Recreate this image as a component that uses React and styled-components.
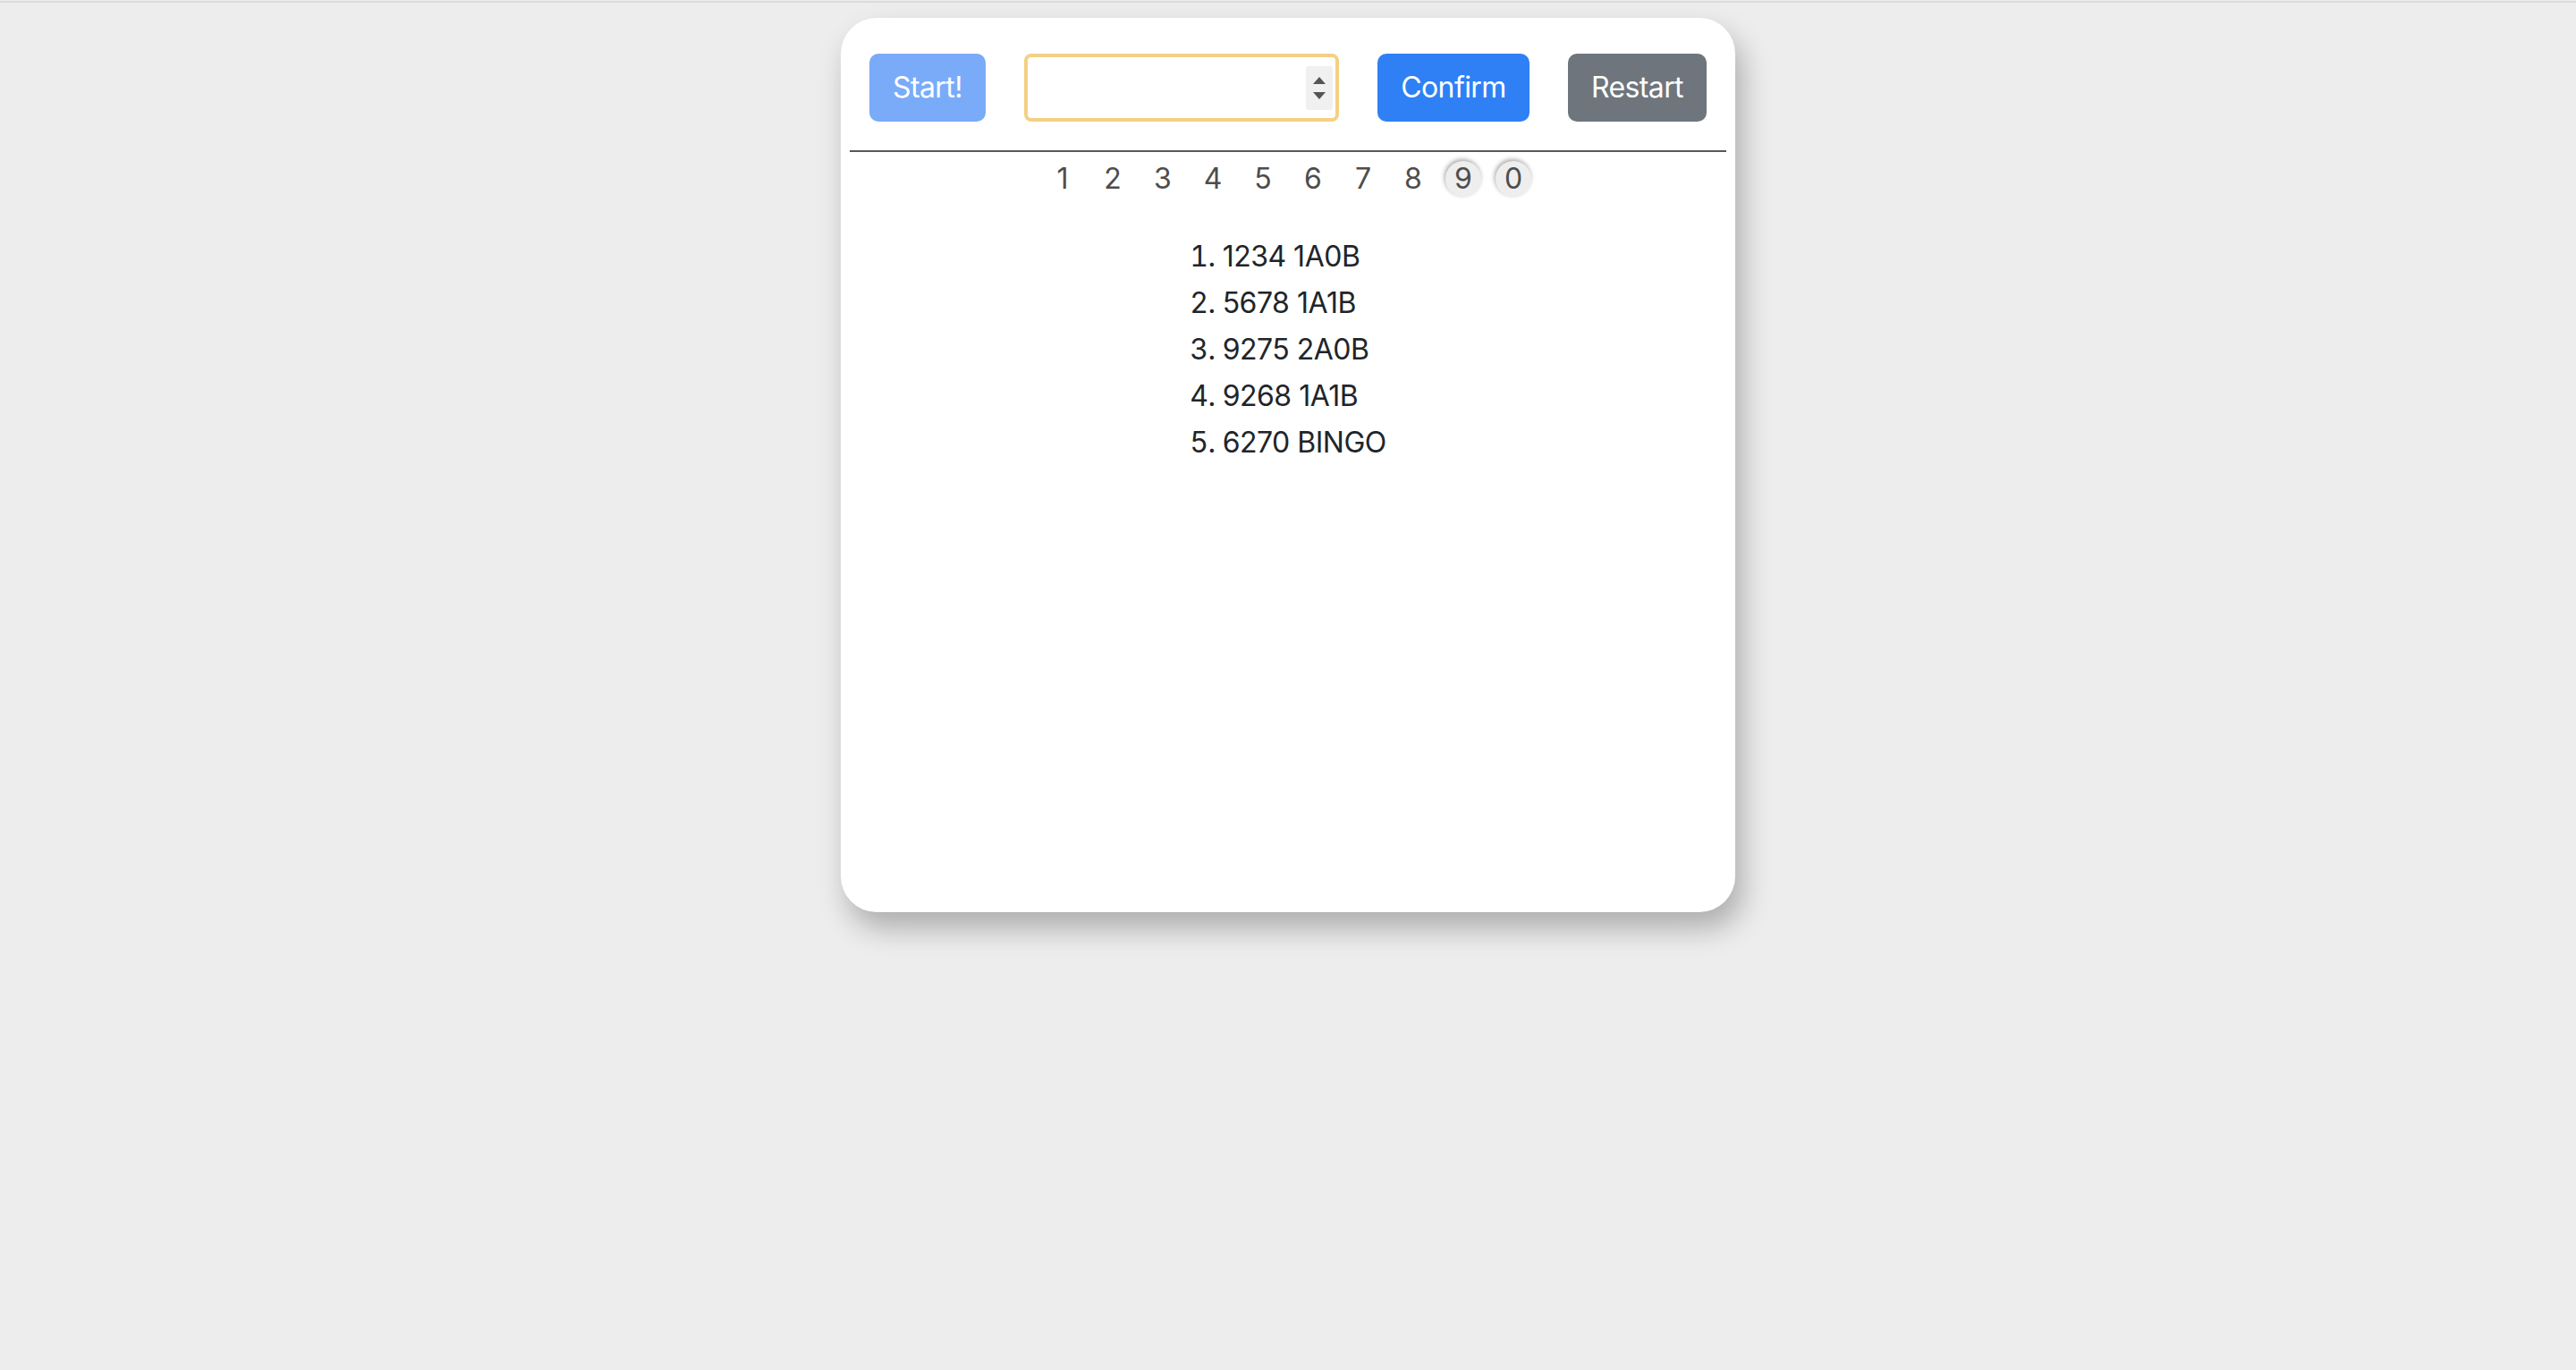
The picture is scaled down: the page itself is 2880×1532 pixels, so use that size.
import React from "react";
import styled, { createGlobalStyle } from "styled-components";

const guesses = [
  "1234 1A0B",
  "5678 1A1B",
  "9275 2A0B",
  "9268 1A1B",
  "6270 BINGO",
];

const digits = ["1", "2", "3", "4", "5", "6", "7", "8", "9", "0"];
const used = ["9", "0"];

export default function App() {
  return (
    <>
      <GlobalStyle />
      <Page>
        <TopRule />
        <Card>
          <Toolbar>
            <Button $variant="disabled">Start!</Button>
            <NumberBox>
              <NumberInput type="text" />
              <Spinner>
                <svg width="14" height="8" viewBox="0 0 14 8">
                  <path d="M7 0 L14 8 L0 8 Z" fill="#555" />
                </svg>
                <svg width="14" height="8" viewBox="0 0 14 8">
                  <path d="M0 0 L14 0 L7 8 Z" fill="#555" />
                </svg>
              </Spinner>
            </NumberBox>
            <Button $variant="primary">Confirm</Button>
            <Button $variant="secondary">Restart</Button>
          </Toolbar>
          <Divider />
          <DigitRow>
            {digits.map((d) => (
              <Digit key={d} $used={used.includes(d)}>
                {d}
              </Digit>
            ))}
          </DigitRow>
          <GuessList>
            {guesses.map((g) => (
              <li key={g}>{g}</li>
            ))}
          </GuessList>
        </Card>
      </Page>
    </>
  );
}

const GlobalStyle = createGlobalStyle`
  * {
    box-sizing: border-box;
  }
  body {
    margin: 0;
    font-family: Inter, "Liberation Sans", sans-serif;
    background: #ededed;
  }
`;

const Page = styled.div`
  min-height: 100vh;
  display: flex;
  flex-direction: column;
  align-items: center;
  background: #ededed;
`;

const TopRule = styled.div`
  align-self: stretch;
  height: 2px;
  margin-top: 1px;
  background: #dcdae0;
`;

const Card = styled.div`
  width: 1000px;
  height: 1000px;
  margin-top: 17px;
  padding: 40px 10px 0;
  background: #fff;
  border-radius: 40px;
  box-shadow: 8px 18px 32px rgba(0, 0, 0, 0.27);
`;

const Toolbar = styled.div`
  display: flex;
  align-items: center;
  justify-content: space-between;
  padding: 0 22px;
`;

const colors = {
  disabled: "#7aabf9",
  primary: "#2f80f5",
  secondary: "#6e757d",
};

const Button = styled.button`
  font-family: Inter, "Liberation Sans", sans-serif;
  font-size: 32px;
  line-height: 48px;
  letter-spacing: -0.6px;
  padding: 12px 24px;
  border: 2px solid ${(p) => colors[p.$variant]};
  background: ${(p) => colors[p.$variant]};
  color: #fff;
  border-radius: 10px;
  cursor: pointer;
`;

const NumberBox = styled.div`
  width: 352px;
  height: 76px;
  display: flex;
  align-items: center;
  padding: 0 3px 0 10px;
  border: 4px solid #f3d084;
  border-radius: 8px;
`;

const NumberInput = styled.input`
  flex: 1;
  min-width: 0;
  border: none;
  outline: none;
  font-family: Inter, "Liberation Sans", sans-serif;
  font-size: 32px;
  background: transparent;
`;

const Spinner = styled.div`
  width: 30px;
  height: 49px;
  display: flex;
  flex-direction: column;
  align-items: center;
  justify-content: center;
  gap: 9px;
  background: #f0f0f0;
  border-radius: 3px;
`;

const Divider = styled.div`
  height: 2px;
  margin-top: 32px;
  background: #575757;
`;

const DigitRow = styled.div`
  display: flex;
  justify-content: center;
  gap: 16px;
  margin-top: 10px;
`;

const Digit = styled.span`
  width: 40px;
  height: 40px;
  border-radius: 50%;
  font-size: 32px;
  line-height: 40px;
  text-align: center;
  color: #4d4d4d;
  background: ${(p) => (p.$used ? "#eeeeee" : "transparent")};
  box-shadow: ${(p) => (p.$used ? "-1px -2px 5px rgba(0, 0, 0, 0.35)" : "none")};
`;

const GuessList = styled.ol`
  width: fit-content;
  margin: 41px auto 0;
  padding: 0;
  list-style-position: inside;
  font-size: 32px;
  line-height: 52px;
  letter-spacing: -0.5px;
  color: #212529;
`;
